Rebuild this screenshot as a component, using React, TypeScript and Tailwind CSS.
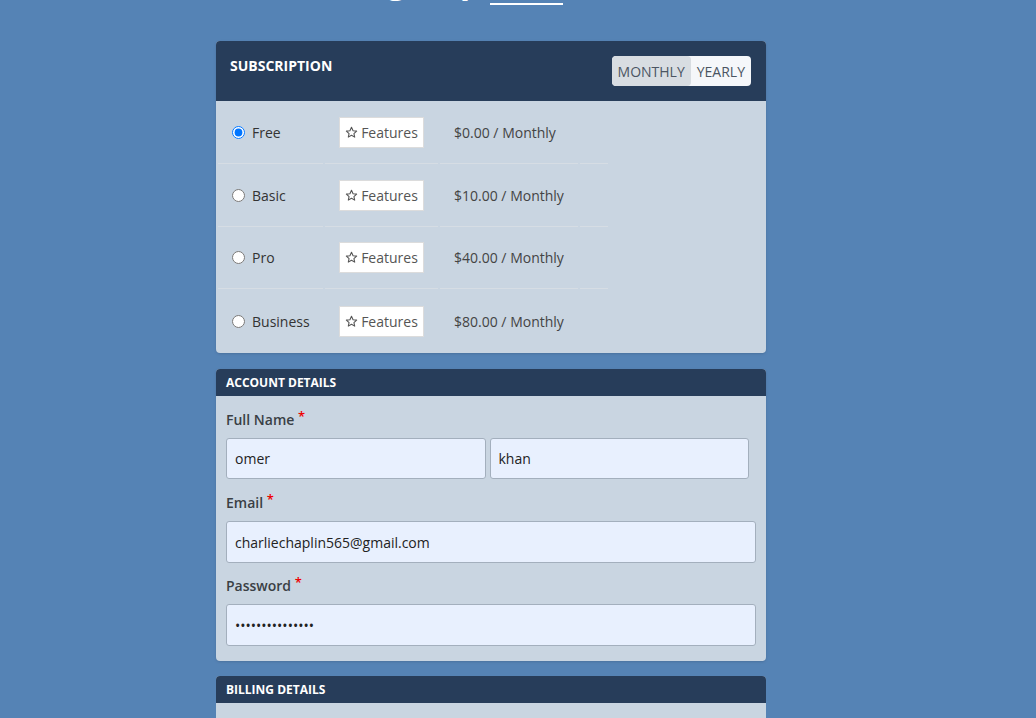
import { useState } from "react"

type Plan = {
  name: string
  price: string
}

const plans: Plan[] = [
  { name: "Free", price: "$0.00" },
  { name: "Basic", price: "$10.00" },
  { name: "Pro", price: "$40.00" },
  { name: "Business", price: "$80.00" },
]

function StarIcon() {
  return (
    <svg width="13" height="13" viewBox="0 0 24 24" fill="none" stroke="#555" strokeWidth="2" strokeLinejoin="round">
      <path d="M12 2.5l2.9 6.2 6.6.7-5 4.5 1.4 6.6L12 17.2l-5.9 3.3 1.4-6.6-5-4.5 6.6-.7z" />
    </svg>
  )
}

function Label({ text }: { text: string }) {
  return (
    <div className="text-[14px] leading-[20px] font-semibold text-[#3a3f45] mb-[8px]">
      {text} <span className="text-[#e00] relative -top-[4px] text-[13px]">*</span>
    </div>
  )
}

export default function App() {
  const [plan, setPlan] = useState("Free")
  const [period, setPeriod] = useState("monthly")
  const [firstName, setFirstName] = useState("omer")
  const [lastName, setLastName] = useState("khan")
  const [email, setEmail] = useState("charliechaplin565@gmail.com")
  const [password, setPassword] = useState("charliechaplin5")

  const inputClass =
    "w-full px-[8px] bg-[#e8f0fe] border border-[#a3afbd] rounded-[3px] text-[14px] text-[#222] outline-none"

  return (
    <div className="min-h-screen bg-[#5583b5] font-['Open_Sans',sans-serif] overflow-hidden">
      <div className="w-[550px] ml-[216px]">
        <h1 className="text-[34px] leading-[36px] font-bold text-white -mt-[38px] mb-[43px] ml-[142px] whitespace-nowrap">
          Sign up <span className="border-b-2 border-white">now</span>
        </h1>

        <div className="rounded-[4px] overflow-hidden shadow-sm bg-[#c9d5e1]">
          <div className="h-[60px] bg-[#273d5a] flex justify-between pl-[14px] pr-[15px]">
            <div className="pt-[15px] text-[14px] leading-[20px] font-bold text-white">SUBSCRIPTION</div>
            <div className="mt-[15px] h-[30px] flex rounded-[4px] overflow-hidden bg-[#f5f7fa] text-[14px] text-[#4b5563]">
              <button
                onClick={() => setPeriod("monthly")}
                className={`px-[6px] rounded-[4px] ${period === "monthly" ? "bg-[#d8dde2]" : ""}`}
              >
                MONTHLY
              </button>
              <button
                onClick={() => setPeriod("yearly")}
                className={`px-[6px] rounded-[4px] ${period === "yearly" ? "bg-[#d8dde2]" : ""}`}
              >
                YEARLY
              </button>
            </div>
          </div>

          <div className="pl-[2px]">
            {plans.map((p, i) => {
              const last = i === plans.length - 1
              const height = last ? "h-[64px]" : i === 2 ? "h-[62px] border-b border-[#d6dde4]" : "h-[63px] border-b border-[#d6dde4]"
              const cell = `${height} flex items-center px-[14px]`
              return (
                <div key={p.name} className="flex gap-[2px]">
                  <label className={`${cell} w-[105px] gap-[7px] text-[14px] text-[#333] cursor-pointer`}>
                    <input
                      type="radio"
                      name="plan"
                      className="m-0 w-[13px] h-[13px]"
                      checked={plan === p.name}
                      onChange={() => setPlan(p.name)}
                    />
                    {p.name}
                  </label>
                  <div className={`${cell} w-[113px]`}>
                    <button className="h-[31px] w-[85px] bg-white border border-[#dcdcdc] flex items-center justify-center gap-[3px] text-[14px] text-[#555]">
                      <StarIcon />
                      Features
                    </button>
                  </div>
                  <div className={`${cell} w-[138px] text-[14px] text-[#444] whitespace-nowrap`}>
                    {p.price} / {period === "monthly" ? "Monthly" : "Yearly"}
                  </div>
                  <div className={`${cell} w-[28px]`} />
                </div>
              )
            })}
          </div>
        </div>

        <div className="mt-[16px] rounded-[4px] overflow-hidden shadow-sm bg-[#c9d5e1]">
          <div className="h-[27px] bg-[#273d5a] flex items-center px-[10px] text-[12px] font-bold text-white">
            ACCOUNT DETAILS
          </div>
          <div className="px-[10px] pt-[14px] pb-[15px]">
            <Label text="Full Name" />
            <div className="flex gap-[4px] pr-[7px] mb-[14px]">
              <input className={`${inputClass} h-[41px]`} value={firstName} onChange={(e) => setFirstName(e.target.value)} />
              <input className={`${inputClass} h-[41px]`} value={lastName} onChange={(e) => setLastName(e.target.value)} />
            </div>
            <Label text="Email" />
            <input className={`${inputClass} h-[42px] mb-[13px]`} value={email} onChange={(e) => setEmail(e.target.value)} />
            <Label text="Password" />
            <input type="password" className={`${inputClass} h-[42px]`} value={password} onChange={(e) => setPassword(e.target.value)} />
          </div>
        </div>

        <div className="mt-[15px] rounded-[4px] overflow-hidden bg-[#c9d5e1]">
          <div className="h-[27px] bg-[#273d5a] flex items-center px-[10px] text-[12px] font-bold text-white">
            BILLING DETAILS
          </div>
          <div className="h-[200px]" />
        </div>
      </div>
    </div>
  )
}
